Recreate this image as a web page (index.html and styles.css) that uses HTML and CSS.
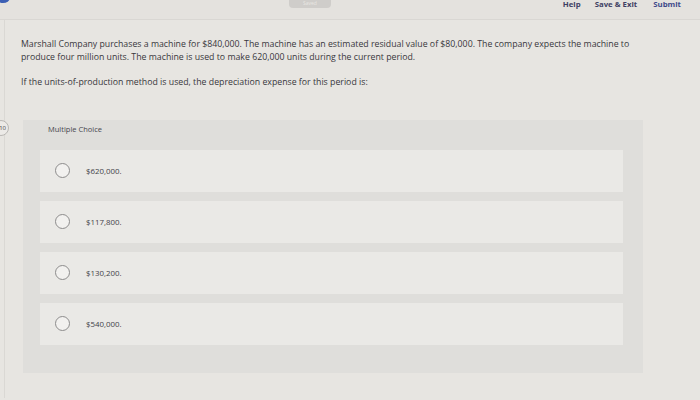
FILE: index.html
```html
<!DOCTYPE html>
<html>
<head>
<meta charset="utf-8">
<link rel="stylesheet" href="styles.css">
</head>
<body>
<header class="topbar">
  <span class="dot"></span>
  <span class="saved">Saved</span>
  <nav class="nav">
    <span class="nav-link">Help</span>
    <span class="nav-link">Save &amp; Exit</span>
    <span class="nav-link submit">Submit</span>
  </nav>
</header>
<main class="content">
  <p class="q">Marshall Company purchases a machine for $840,000. The machine has an estimated residual value of $80,000. The company expects the machine to produce four million units. The machine is used to make 620,000 units during the current period.</p>
  <p class="q ask">If the units-of-production method is used, the depreciation expense for this period is:</p>
  <section class="mc-area">
    <span class="qnum">10</span>
    <div class="panel">
      <div class="panel-title">Multiple Choice</div>
      <div class="options">
        <div class="opt"><span class="radio"></span><span class="opt-text">$620,000.</span></div>
        <div class="opt"><span class="radio"></span><span class="opt-text">$117,800.</span></div>
        <div class="opt"><span class="radio"></span><span class="opt-text">$130,200.</span></div>
        <div class="opt"><span class="radio"></span><span class="opt-text">$540,000.</span></div>
      </div>
    </div>
  </section>
</main>
</body>
</html>
```

FILE: styles.css
```css
html, body {
  margin: 0;
  padding: 0;
}
body {
  width: 700px;
  height: 400px;
  overflow: hidden;
  background: #e7e5e1;
  font-family: "Open Sans", Lato, sans-serif;
  color: #3c3b40;
}
.topbar {
  position: relative;
  height: 19px;
  border-bottom: 1px solid #d9d7d3;
  background: #e4e2de;
  display: flex;
  align-items: flex-start;
}
.dot {
  position: absolute;
  left: -4px;
  top: -8px;
  width: 14px;
  height: 11px;
  border-radius: 50%;
  background: #3c5fb4;
}
.saved {
  position: absolute;
  left: 289px;
  top: -1px;
  width: 42px;
  height: 9px;
  border-radius: 0 0 4px 4px;
  background: #cfcdca;
  color: #e9e7e3;
  font-size: 5px;
  text-align: center;
  line-height: 8px;
}
.nav {
  margin-left: auto;
  margin-right: 19px;
  display: flex;
  gap: 14px;
}
.nav-link {
  font-size: 7.8px;
  font-weight: 700;
  color: #3e3f63;
  line-height: 8px;
}
.submit {
  color: #3f4a8a;
  margin-left: 2px;
}
.content {
  border-left: 1px solid #dad8d4;
  margin-left: 4px;
  padding: 18px 0 0 16px;
  height: 360px;
}
.q {
  margin: 0;
  width: 626px;
  font-size: 8.75px;
  line-height: 12.5px;
  color: #38373c;
}
.ask {
  margin-top: 13px;
}
.mc-area {
  display: flex;
  margin-top: 31px;
  margin-left: -20px;
}
.qnum {
  width: 16px;
  height: 16px;
  box-sizing: border-box;
  border: 1px solid #b9b7b4;
  border-radius: 50%;
  background: #eceae7;
  font-size: 6px;
  line-height: 14px;
  text-align: right;
  padding-right: 2px;
  margin-left: -8px;
  color: #444;
  flex: none;
}
.panel {
  margin-left: 14px;
  width: 620px;
  height: 253px;
  box-sizing: border-box;
  background: #dfdedb;
  padding: 3px 20px 0 17px;
}
.panel-title {
  font-size: 7.5px;
  color: #48474e;
  margin-left: 8px;
  line-height: 12px;
}
.options {
  margin-top: 15px;
  display: flex;
  flex-direction: column;
  gap: 9px;
}
.opt {
  height: 42px;
  background: #eae9e6;
  display: flex;
  align-items: center;
  padding-left: 15px;
}
.radio {
  width: 15px;
  height: 15px;
  box-sizing: border-box;
  border: 1px solid #8d8c8c;
  border-radius: 50%;
  background: #f2f1ef;
  flex: none;
}
.opt-text {
  margin-left: 16px;
  font-size: 7.9px;
  color: #434248;
}
```
